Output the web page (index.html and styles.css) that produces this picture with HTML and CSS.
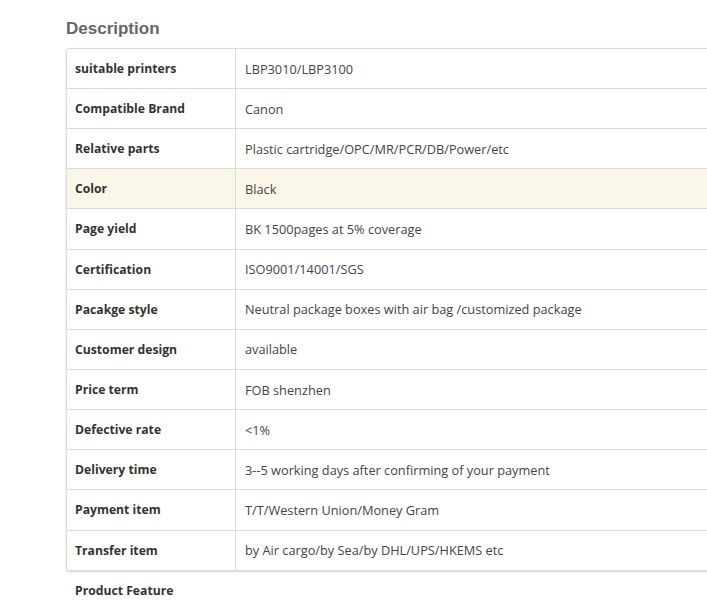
FILE: index.html
```html
<!DOCTYPE html>
<html>
<head>
<meta charset="utf-8">
<link rel="stylesheet" href="styles.css">
</head>
<body>
<div class="page">
  <h2 class="section-title">Description</h2>
  <div class="spec">
    <div class="row"><div class="key">suitable printers</div><div class="val">LBP3010/LBP3100</div></div>
    <div class="row"><div class="key">Compatible Brand</div><div class="val">Canon</div></div>
    <div class="row"><div class="key">Relative parts</div><div class="val">Plastic cartridge/OPC/MR/PCR/DB/Power/etc</div></div>
    <div class="row hl"><div class="key">Color</div><div class="val">Black</div></div>
    <div class="row"><div class="key">Page yield</div><div class="val">BK 1500pages at 5% coverage</div></div>
    <div class="row"><div class="key">Certification</div><div class="val">ISO9001/14001/SGS</div></div>
    <div class="row"><div class="key">Pacakge style</div><div class="val">Neutral package boxes with air bag /customized package</div></div>
    <div class="row"><div class="key">Customer design</div><div class="val">available</div></div>
    <div class="row"><div class="key">Price term</div><div class="val">FOB shenzhen</div></div>
    <div class="row"><div class="key">Defective rate</div><div class="val">&lt;1%</div></div>
    <div class="row"><div class="key">Delivery time</div><div class="val">3--5 working days after confirming of your payment</div></div>
    <div class="row"><div class="key">Payment item</div><div class="val">T/T/Western Union/Money Gram</div></div>
    <div class="row"><div class="key">Transfer item</div><div class="val">by Air cargo/by Sea/by DHL/UPS/HKEMS etc</div></div>
  </div>
  <div class="feature">Product Feature</div>
</div>
</body>
</html>
```

FILE: styles.css
```css
html, body {
  margin: 0;
  padding: 0;
  overflow: hidden;
  background: #fff;
}
.page {
  padding: 19px 0 0 66px;
  width: 680px;
  font-family: "Open Sans", "Noto Sans", sans-serif;
  color: #333;
}
.section-title {
  margin: 0 0 9px 0;
  font-family: "Liberation Sans", Arial, sans-serif;
  font-size: 17px;
  font-weight: bold;
  color: #666;
  line-height: 20px;
}
.spec {
  border: 1px solid #dcdcdc;
  border-radius: 3px;
  box-shadow: 0 1px 2px rgba(0,0,0,0.18);
  width: 660px;
}
.row {
  display: flex;
  height: 40.15px;
  border-top: 1px solid #dcdcdc;
  box-sizing: border-box;
  align-items: center;
}
.row:first-child {
  border-top: none;
  height: 39px;
}
.row.hl {
  background: #faf6e8;
}
.key {
  width: 169px;
  box-sizing: border-box;
  padding-left: 8px;
  font-weight: bold;
  font-size: 12.2px;
  height: 100%;
  display: flex;
  align-items: center;
  border-right: 1px solid #dcdcdc;
}
.val {
  padding-left: 9px;
  font-size: 12.75px;
  color: #444;
}
.feature {
  padding: 11px 0 0 9px;
  font-weight: bold;
  font-size: 12.2px;
}
```
